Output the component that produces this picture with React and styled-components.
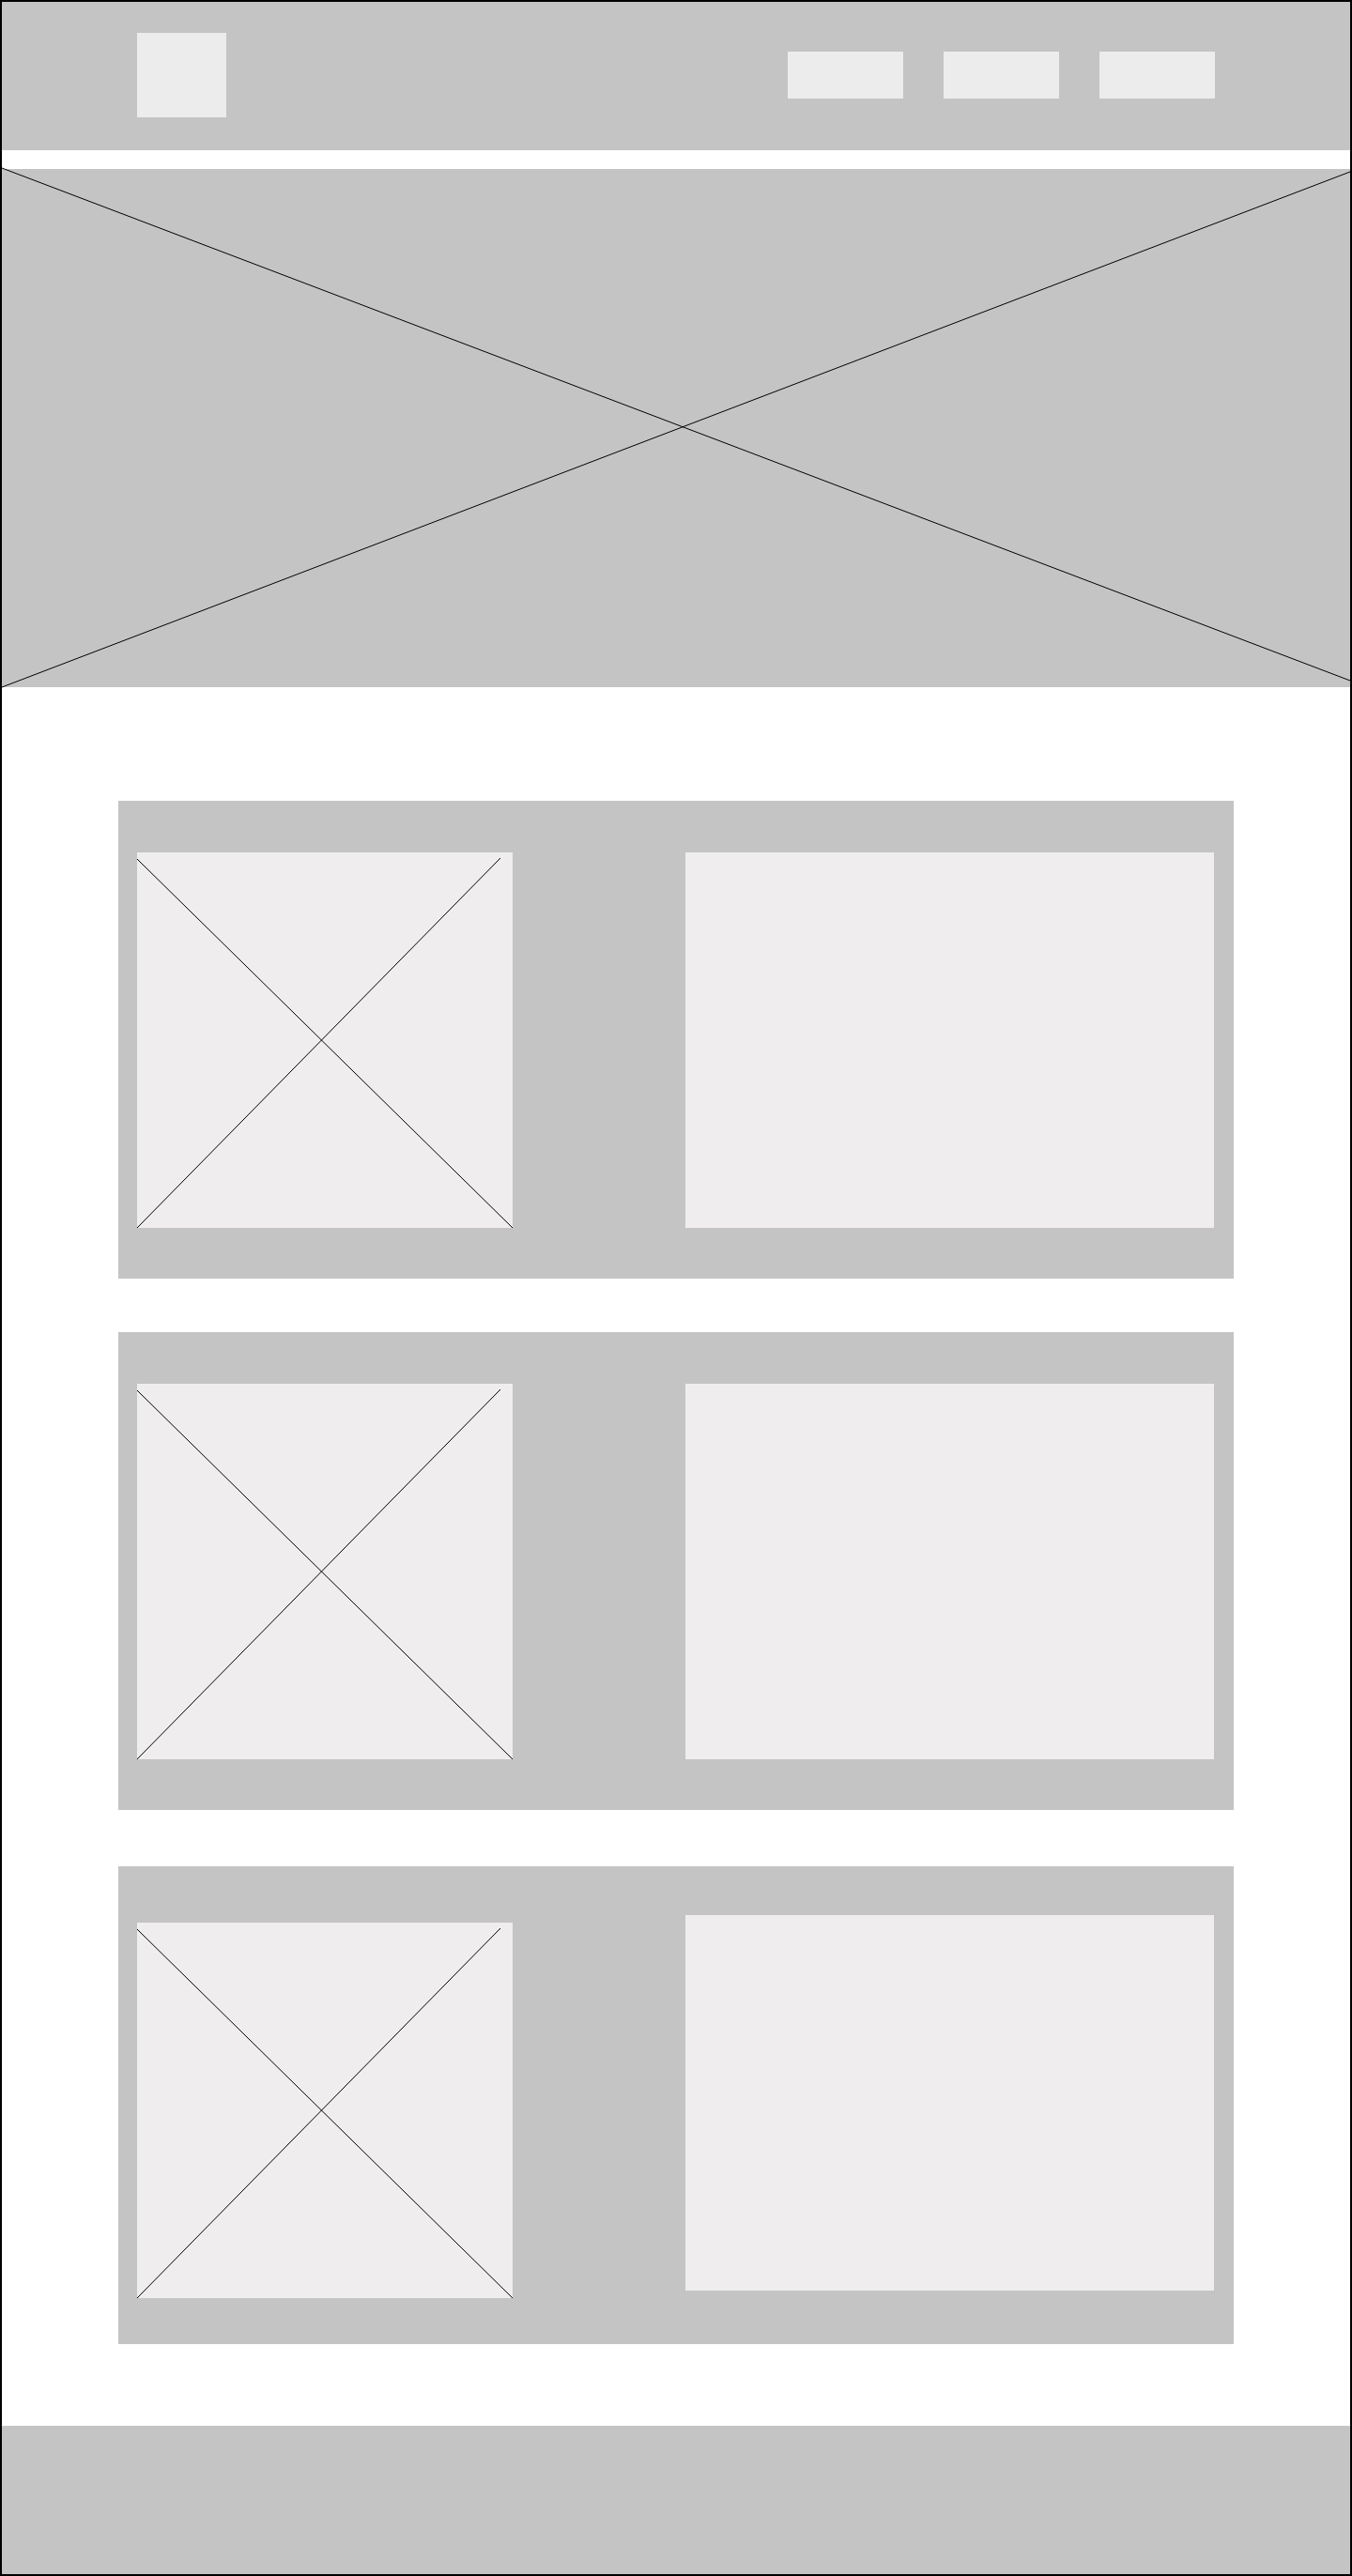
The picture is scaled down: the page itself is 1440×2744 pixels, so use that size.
import React from "react";
import styled, { createGlobalStyle } from "styled-components";

const GlobalStyle = createGlobalStyle`
    * {
        box-sizing: border-box;
    }
    body {
        margin: 0;
        background: #ffffff;
        font-family: "Liberation Sans", Arial, sans-serif;
    }
`;

const Page = styled.div`
    width: 1440px;
    height: 2744px;
    border: 2px solid #000000;
    background: #ffffff;
    display: flex;
    flex-direction: column;
`;

const Header = styled.header`
    height: 158px;
    flex-shrink: 0;
    background: #c4c4c4;
    display: flex;
    justify-content: space-between;
    align-items: flex-start;
    padding: 0 144px;
    .header__logo {
        width: 95px;
        height: 90px;
        margin-top: 33px;
        background: #ececec;
    }
`;

const Nav = styled.nav`
    display: flex;
    gap: 43px;
    margin-top: 53px;
`;

const NavItem = styled.div`
    width: 123px;
    height: 50px;
    background: #ececec;
`;

const Hero = styled.section`
    margin-top: 20px;
    height: 552px;
    flex-shrink: 0;
    background: #c4c4c4;
    svg {
        display: block;
        width: 100%;
        height: 100%;
        overflow: visible;
    }
`;

const Main = styled.main`
    flex: 1;
    display: flex;
    flex-direction: column;
    align-items: center;
    padding-top: 121px;
`;

const Card = styled.div`
    width: 1188px;
    height: 509px;
    margin-top: ${(p) => p.$space}px;
    background: #c4c4c4;
    display: flex;
    justify-content: space-between;
    align-items: flex-start;
    padding: ${(p) => p.$padTop}px 21px 0 20px;
`;

const Picture = styled.div`
    width: 400px;
    height: 400px;
    margin-top: ${(p) => p.$shift}px;
    background: #efedee;
    svg {
        display: block;
        width: 100%;
        height: 100%;
    }
`;

const TextBox = styled.div`
    width: 563px;
    height: 400px;
    background: #efedee;
`;

const Footer = styled.footer`
    height: 158px;
    flex-shrink: 0;
    background: #c4c4c4;
`;

// placeholder "X" drawn inside each picture box
function CrossLines() {
    return (
        <svg viewBox="0 0 400 400">
            <line x1="0" y1="7" x2="400" y2="400" stroke="#000000" strokeWidth="1" />
            <line x1="387" y1="6" x2="0" y2="400" stroke="#000000" strokeWidth="1" />
        </svg>
    );
}

const cards = [
    { space: 0, padTop: 55, shift: 0 },
    { space: 57, padTop: 55, shift: 0 },
    { space: 60, padTop: 52, shift: 8 },
];

function App() {
    return (
        <>
            <GlobalStyle />
            <Page>
                <Header>
                    <div className="header__logo" />
                    <Nav>
                        <NavItem />
                        <NavItem />
                        <NavItem />
                    </Nav>
                </Header>
                <Hero>
                    <svg viewBox="0 0 1436 552" preserveAspectRatio="none">
                        <line x1="0" y1="-1" x2="1436" y2="545" stroke="#000000" strokeWidth="1" />
                        <line x1="1436" y1="3" x2="0" y2="552" stroke="#000000" strokeWidth="1" />
                    </svg>
                </Hero>
                <Main>
                    {cards.map((c, i) => (
                        <Card key={i} $space={c.space} $padTop={c.padTop}>
                            <Picture $shift={c.shift}>
                                <CrossLines />
                            </Picture>
                            <TextBox />
                        </Card>
                    ))}
                </Main>
                <Footer />
            </Page>
        </>
    );
}

export default App;
